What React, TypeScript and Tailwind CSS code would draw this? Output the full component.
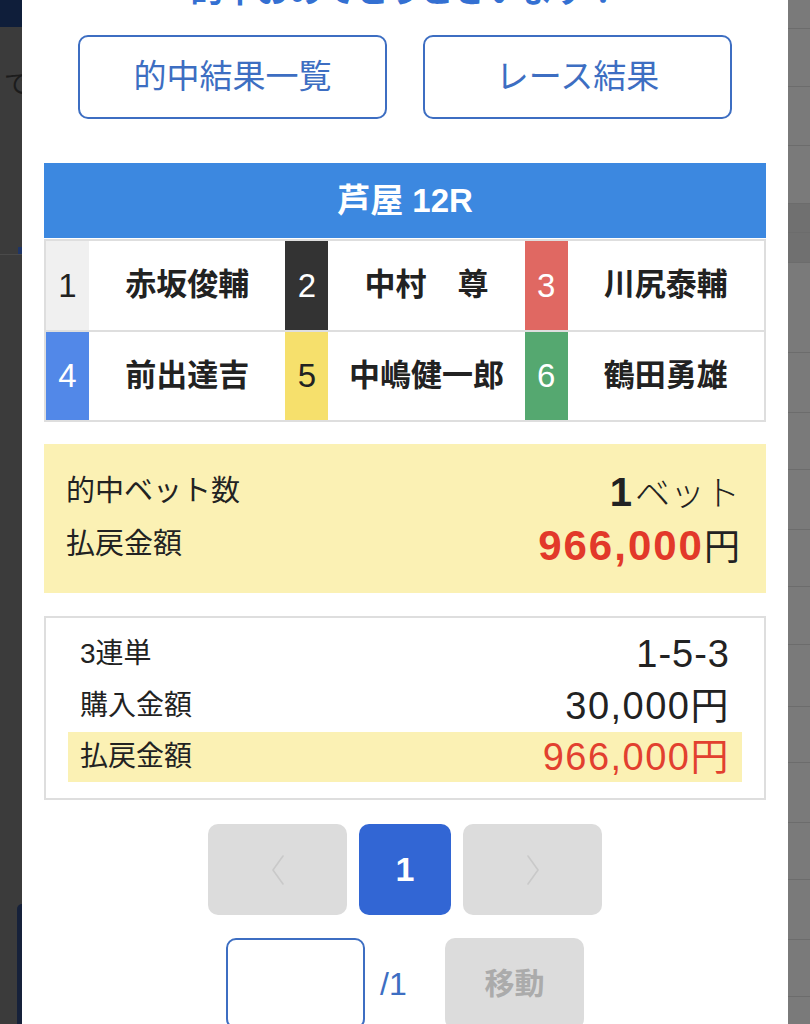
const font = "font-['Liberation_Sans','Noto_Sans_CJK_JP',sans-serif]";

const racers = [
    [
        { no: 1, name: '赤坂俊輔', cell: 'bg-[#f0f0f0] text-[#222]' },
        { no: 2, name: '中村　尊', cell: 'bg-[#333333] text-white' },
        { no: 3, name: '川尻泰輔', cell: 'bg-[#e06862] text-white' },
    ],
    [
        { no: 4, name: '前出達吉', cell: 'bg-[#5288e8] text-white' },
        { no: 5, name: '中嶋健一郎', cell: 'bg-[#f6e06c] text-[#222]' },
        { no: 6, name: '鶴田勇雄', cell: 'bg-[#55a870] text-white' },
    ],
];

// rows of the page behind the modal, right side
const sideRows = [29, 58, 59, 58, 29, 30, 90, 60, 57, 60, 57, 58, 62, 56, 60, 57, 60, 57];

const Chevron = ({ dir }: { dir: 'left' | 'right' }) => (
    <svg width="16" height="32" viewBox="0 0 16 32" fill="none" stroke="#c9c9c9" strokeWidth="1.6" strokeLinecap="round" strokeLinejoin="round">
        {dir === 'left' ? <polyline points="13,2 3,16 13,30" /> : <polyline points="3,2 13,16 3,30" />}
    </svg>
);

const App = () => {
    return (
        <div className={`flex h-[1024px] w-[810px] overflow-hidden ${font}`}>
            {/* Page behind, left */}
            <div className="flex w-[22px] shrink-0 flex-col bg-[#3b3b3b]">
                <div className="h-[27px] shrink-0 bg-[#0f1e3a]" />
                <div className="mt-[44px] shrink-0 whitespace-nowrap pl-[4px] text-[26px] leading-none text-[#1c1c1c]">で</div>
                <div className="ml-[18px] mt-[150px] h-[7px] w-[4px] shrink-0 bg-[#1f3566]" />
                <div className="h-[650px] shrink-0 border-t border-[#4a4a4a]" />
                <div className="ml-[17px] flex-1 rounded-tl-[6px] bg-[#16213a]" />
            </div>

            {/* Modal */}
            <div className="w-[766px] shrink-0 bg-white px-[22px]">
                <p className="-mt-[26px] h-[32px] whitespace-nowrap text-center text-[33px] font-bold leading-none text-[#3470d2]">
                    的中おめでとうございます！
                </p>

                <div className="mt-[29px] flex justify-center gap-[36px]">
                    <button className="h-[84px] w-[309px] rounded-[10px] border-2 border-[#3d6ec2] text-[33px] text-[#3d6ec2]">
                        的中結果一覧
                    </button>
                    <button className="h-[84px] w-[309px] rounded-[10px] border-2 border-[#3d6ec2] text-[33px] text-[#3d6ec2]">
                        レース結果
                    </button>
                </div>

                {/* Race card */}
                <div className="mt-[44px]">
                    <div className="flex h-[75px] items-center justify-center bg-[#3c88e0] text-[33px] font-semibold text-white">
                        芦屋 12R
                    </div>
                    <div className="mt-[1px] border-2 border-[#dedede]">
                        {racers.map((row, i) => (
                            <div key={i} className={`grid grid-cols-3 ${i > 0 ? 'h-[90px] border-t-2 border-[#dedede]' : 'h-[89px]'}`}>
                                {row.map((r) => (
                                    <div key={r.no} className="flex">
                                        <div className={`flex w-[43px] items-center justify-center text-[33px] ${r.cell}`}>{r.no}</div>
                                        <div className="flex flex-1 items-center justify-center whitespace-nowrap text-[31px] font-bold text-[#222]">
                                            {r.name}
                                        </div>
                                    </div>
                                ))}
                            </div>
                        ))}
                    </div>
                </div>

                {/* Summary */}
                <div className="mt-[22px] flex h-[149px] flex-col justify-center bg-[#fbf1b4] pl-[22px] pr-[26px] text-[#222]">
                    <div className="flex h-[53px] items-center justify-between">
                        <span className="text-[29px]">的中ベット数</span>
                        <span className="flex items-baseline">
                            <span className="text-[40px] font-bold">1</span>
                            <span className="ml-[3px] text-[35px] font-light">ベット</span>
                        </span>
                    </div>
                    <div className="flex h-[53px] items-center justify-between">
                        <span className="text-[29px]">払戻金額</span>
                        <span className="flex items-baseline">
                            <span className="text-[42px] font-bold tracking-[2px] text-[#e2392a]">966,000</span>
                            <span className="text-[36px]">円</span>
                        </span>
                    </div>
                </div>

                {/* Detail */}
                <div className="mt-[23px] border-2 border-[#dedede] px-[22px] pb-[16px] pt-[10px] text-[#222]">
                    <div className="flex h-[52px] items-center justify-between px-[12px]">
                        <span className="text-[28px]">3連単</span>
                        <span className="text-[38px] font-light tracking-[1px]">1-5-3</span>
                    </div>
                    <div className="flex h-[52px] items-center justify-between px-[12px]">
                        <span className="text-[28px]">購入金額</span>
                        <span className="text-[38px] tracking-[1.5px]">30,000円</span>
                    </div>
                    <div className="flex h-[50px] items-center justify-between bg-[#fbf1b4] px-[12px]">
                        <span className="text-[28px]">払戻金額</span>
                        <span className="text-[38px] tracking-[1.5px] text-[#e2402f]">966,000円</span>
                    </div>
                </div>

                {/* Pager */}
                <div className="mt-[24px] flex justify-center gap-[12px]">
                    <button className="flex h-[91px] w-[139px] items-center justify-center rounded-[10px] bg-[#dcdcdc]">
                        <Chevron dir="left" />
                    </button>
                    <button className="flex h-[91px] w-[92px] items-center justify-center rounded-[10px] bg-[#3266d4] text-[34px] font-bold text-white">
                        1
                    </button>
                    <button className="flex h-[91px] w-[139px] items-center justify-center rounded-[10px] bg-[#dcdcdc]">
                        <Chevron dir="right" />
                    </button>
                </div>

                <div className="mt-[23px] flex items-center justify-center">
                    <div className="h-[91px] w-[139px] rounded-[10px] border-2 border-[#3d6ec2] bg-white" />
                    <span className="ml-[15px] w-[30px] text-[32px] text-[#3d6ec2]">/1</span>
                    <button className="ml-[35px] flex h-[91px] w-[139px] items-center justify-center rounded-[10px] bg-[#dcdcdc] text-[30px] font-bold text-[#ababab]">
                        移動
                    </button>
                </div>
            </div>

            {/* Page behind, right */}
            <div className="flex w-[22px] shrink-0 flex-col bg-[#7a7a7a]">
                {sideRows.map((h, i) => (
                    <div
                        key={i}
                        style={{ height: h }}
                        className={`shrink-0 border-b border-[#6c6c6c] ${i === 4 || i === 5 ? 'bg-[#707070]' : ''}`}
                    />
                ))}
            </div>
        </div>
    );
};

export default App;
